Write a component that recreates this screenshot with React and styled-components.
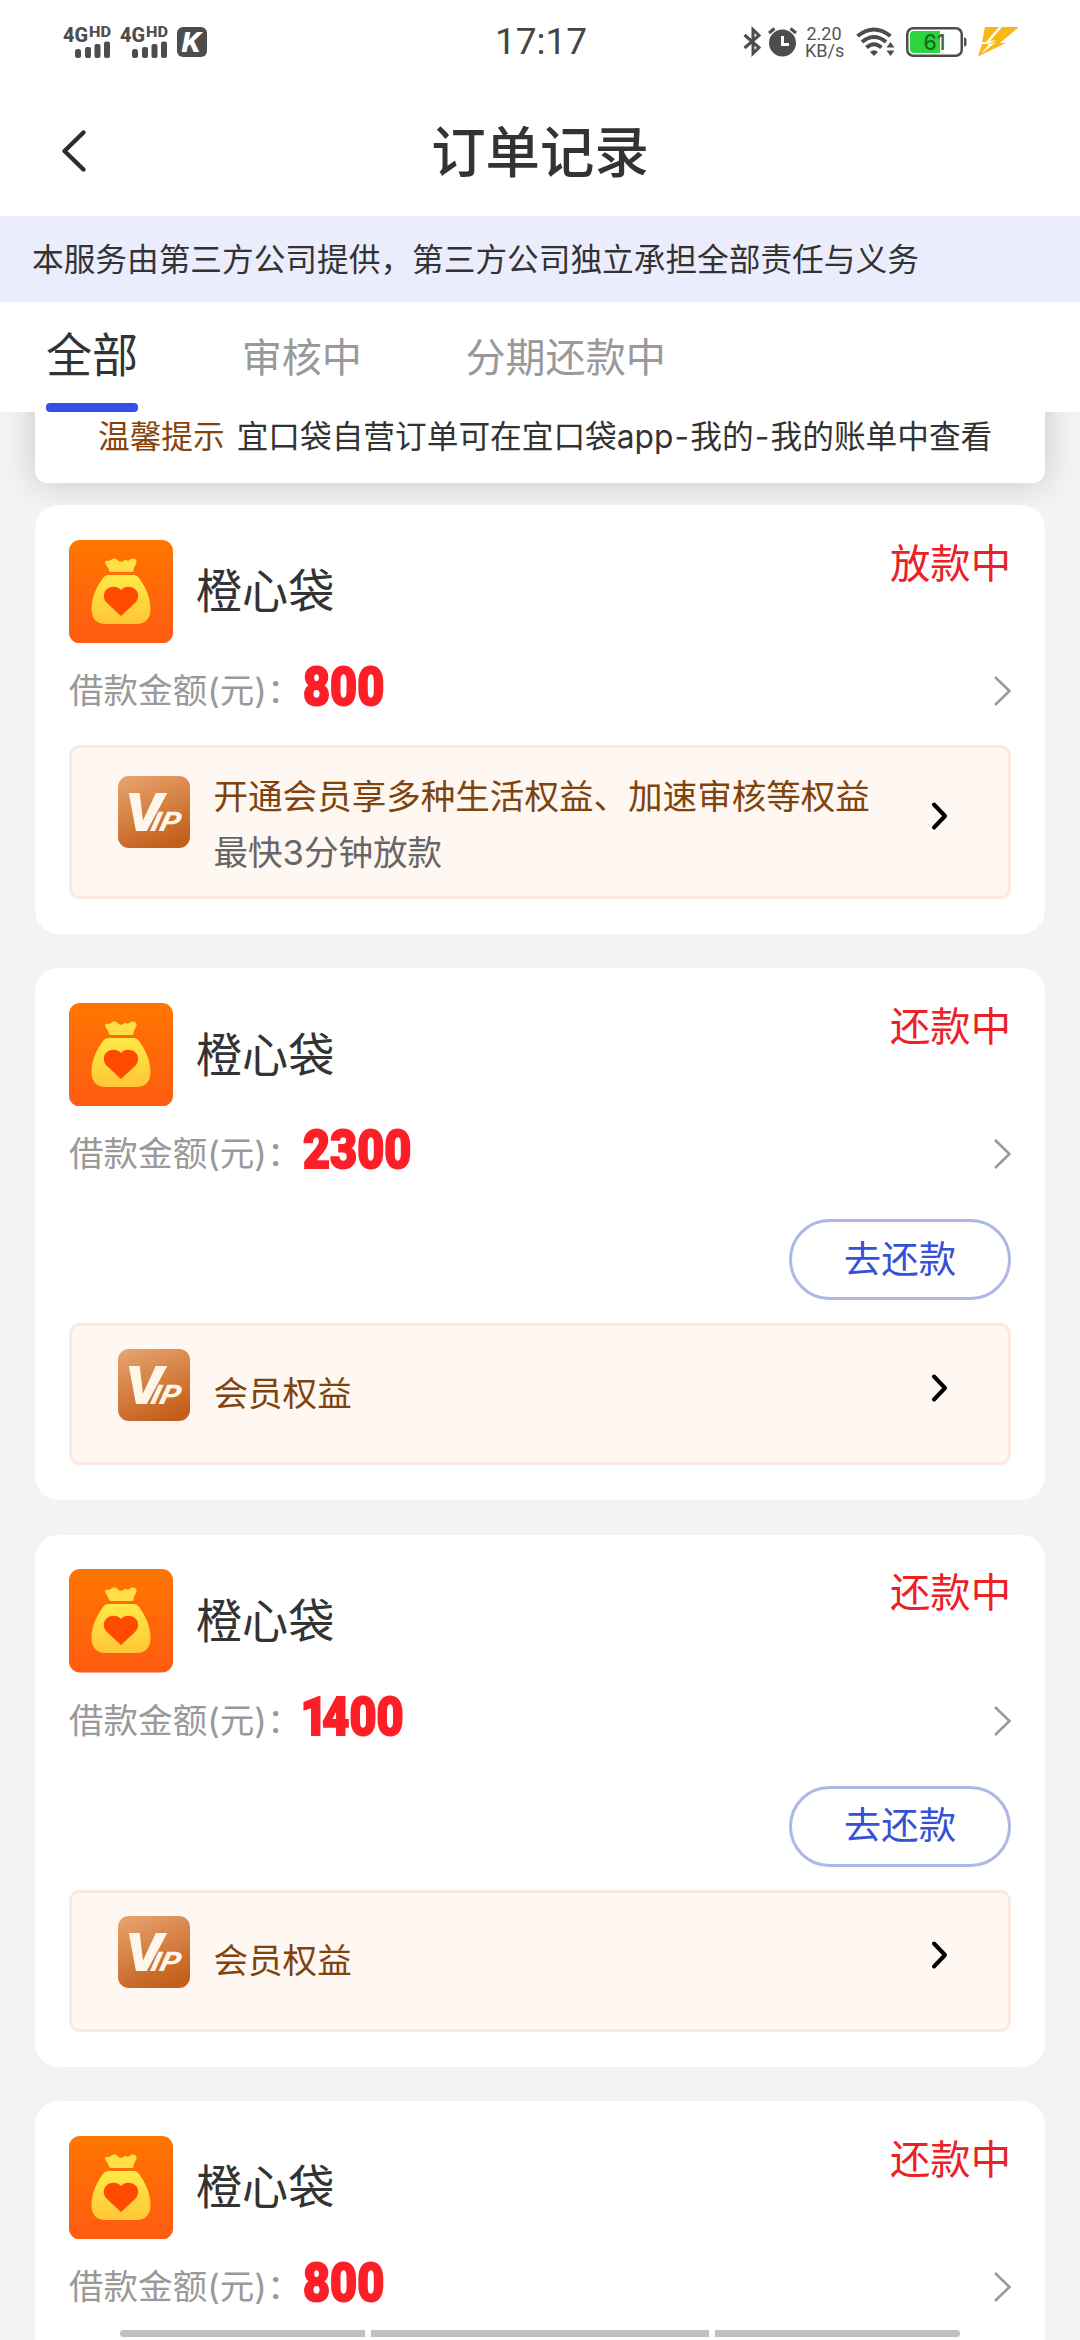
import styled, { createGlobalStyle } from "styled-components";

const GlobalStyle = createGlobalStyle`
  * {
    box-sizing: border-box;
  }

  body {
    margin: 0;
    background: #f3f3f3;
    font-family: Inter, "Noto Sans CJK SC", sans-serif;
    overflow: hidden;
  }
`;

const Page = styled.div`
  position: relative;
  width: 1080px;
  height: 2340px;
  display: flex;
  flex-direction: column;
  overflow: hidden;
  background: #f3f3f3;
`;

const StatusBar = styled.div`
  height: 84px;
  flex-shrink: 0;
  display: grid;
  grid-template-columns: 1fr auto 1fr;
  align-items: center;
  padding: 0 61px 0 63px;
  background: #fff;

  svg {
    display: block;
    overflow: visible;
  }
`;

const StatusGroup = styled.div`
  display: flex;
  align-items: center;
  justify-content: ${({ $end }) => ($end ? "flex-end" : "flex-start")};
`;

const Signal = styled.svg`
  margin-right: 9px;
`;

const Battery = styled.svg`
  margin: 0 11px 0 10px;
`;

const Clock = styled.div`
  font-family: Roboto, sans-serif;
  font-size: 37px;
  font-weight: 400;
  line-height: 44px;
  color: #444;
`;

const NetSpeed = styled.div`
  width: 38px;
  margin: 0 13px 0 8px;
  font-family: Roboto, sans-serif;
  font-size: 18px;
  line-height: 17px;
  text-align: center;
  color: #555;
  white-space: nowrap;
`;

const Header = styled.div`
  height: 132px;
  flex-shrink: 0;
  display: grid;
  grid-template-columns: 120px 1fr 120px;
  align-items: center;
  background: #fff;
`;

const BackButton = styled.button`
  border: none;
  background: none;
  padding: 2px 0 0 59px;
  text-align: left;

  svg {
    display: block;
  }
`;

const Title = styled.h1`
  margin: 0;
  padding-top: 4px;
  font-size: 54.4px;
  font-weight: 500;
  line-height: 76px;
  text-align: center;
  color: #333;
`;

const Notice = styled.div`
  height: 86px;
  flex-shrink: 0;
  padding-left: 32px;
  background: #ebedfd;
  font-size: 31.68px;
  line-height: 88px;
  color: #333;
  white-space: nowrap;
`;

const Tabs = styled.div`
  height: 110px;
  flex-shrink: 0;
  display: flex;
  gap: 103.5px;
  padding-left: 46px;
  background: #fff;
`;

const Tab = styled.div`
  height: 110px;
  padding-top: ${({ $active }) => ($active ? "6px" : "0")};
  font-size: ${({ $active }) => ($active ? "46.08px" : "40.1px")};
  line-height: ${({ $active }) => ($active ? "95px" : "111px")};
  color: ${({ $active }) => ($active ? "#333" : "#999")};

  &::after {
    content: "";
    display: ${({ $active }) => ($active ? "block" : "none")};
    height: 9px;
    border-radius: 4px;
    background: #3350e6;
  }
`;

const List = styled.div`
  flex: 1;
  min-height: 0;
  overflow: hidden;
  padding: 0 35px;
`;

const Tip = styled.div`
  height: 111px;
  margin-top: -40px;
  margin-bottom: 22px;
  padding: 40px 0 0 63px;
  border-radius: 12px;
  background: #fff;
  box-shadow: 0 0 35px rgba(0, 0, 0, 0.18);
  font-size: 31.68px;
  line-height: 49px;
  color: #333;
  white-space: nowrap;
`;

const TipLabel = styled.span`
  margin-right: 12px;
  color: #86430c;
`;

const Dash = styled.span`
  margin: 0 1.2px;
`;

const Card = styled.div`
  margin-bottom: 34.4px;
  padding: 34.5px 34px 35px;
  border-radius: 24px;
  background: #fff;
`;

const CardHead = styled.div`
  height: 103.5px;
  display: flex;
  align-items: center;
`;

const Name = styled.div`
  margin-left: 23px;
  font-size: 46.08px;
  line-height: 60px;
  color: #333;
`;

const State = styled.div`
  align-self: flex-start;
  margin-left: auto;
  font-size: 40.32px;
  line-height: 47px;
  color: #ec2025;
`;

const AmountRow = styled.div`
  height: 58px;
  margin-top: 19px;
  display: flex;
  align-items: center;

  svg {
    margin-left: auto;
  }
`;

const AmountLabel = styled.span`
  font-size: 34.56px;
  line-height: 58px;
  color: #999;
`;

const Amount = styled.span`
  margin-left: 2px;
  padding-bottom: 8px;
  font-family: Roboto, sans-serif;
  font-size: 54px;
  font-weight: 900;
  line-height: 58px;
  color: #fd1f27;
  -webkit-text-stroke: 2px #fd1f27;
  transform: scaleX(0.865);
  transform-origin: left center;
`;

const Digit = styled.span`
  margin: ${({ $narrow }) => ($narrow ? "0 -6px 0 -3px" : "0")};
`;

const RepayButton = styled.button`
  display: block;
  width: 222px;
  height: 81px;
  margin: 36px 0 0 auto;
  padding: 0;
  border: 3px solid #adb8e8;
  border-radius: 41px;
  background: #fff;
  font-family: inherit;
  font-size: 37.44px;
  line-height: 72px;
  color: #3652d4;
`;

const VipBox = styled.div`
  height: ${({ $tall }) => ($tall ? "154px" : "142px")};
  margin-top: ${({ $tall }) => ($tall ? "25px" : "23px")};
  padding: ${({ $tall }) => ($tall ? "28px" : "23px")} 60px 0 46px;
  display: flex;
  align-items: flex-start;
  border: 3px solid #f9e9e0;
  border-radius: 11px;
  background: #fff7f1;
`;

const VipTexts = styled.div`
  flex: 1;
  margin-top: ${({ $tall }) => ($tall ? "-2px" : "22px")};
  margin-left: 23.5px;
  font-size: 34.56px;
  line-height: 46px;
  color: #7f430d;
`;

const VipSub = styled.div`
  margin-top: 10px;
  color: #666;
`;

const VipArrow = styled.svg`
  margin-top: ${({ $tall }) => ($tall ? "25px" : "24px")};
`;

const HomeBar = styled.div`
  position: absolute;
  left: 120px;
  bottom: 3px;
  width: 840px;
  display: grid;
  grid-template-columns: 245px 338px 245px;
  gap: 6px;
`;

const HomeSegment = styled.div`
  height: 7px;
  border-radius: ${({ $side }) =>
    $side === "left" ? "4px 0 0 4px" : $side === "right" ? "0 4px 4px 0" : "0"};
  background: #c1c1c1;
`;

const SignalIcon = () => (
  <Signal width="48" height="34" viewBox="0 0 48 34" fill="#4d4d4d">
    <g fontFamily="Roboto, sans-serif" fontWeight="800">
      <text x="0" y="17" fontSize="21" textLength="25" lengthAdjust="spacingAndGlyphs">
        4G
      </text>
      <text x="26" y="11.5" fontSize="14" textLength="22" lengthAdjust="spacingAndGlyphs">
        HD
      </text>
    </g>
    <rect x="12" y="24" width="6" height="9" rx="2.5" />
    <rect x="22" y="22" width="6" height="11" rx="2" />
    <rect x="31.5" y="19" width="6" height="14" rx="2" />
    <rect x="41" y="16.5" width="6" height="16.5" rx="2" />
  </Signal>
);

const KIcon = () => (
  <svg width="30" height="30" viewBox="0 0 30 30">
    <rect width="30" height="30" rx="6" fill="#4d4d4d" />
    <text
      x="4.5"
      y="25"
      fontFamily="Roboto, sans-serif"
      fontSize="28"
      fontWeight="800"
      fontStyle="italic"
      textLength="19"
      lengthAdjust="spacingAndGlyphs"
      fill="#fff"
    >
      K
    </text>
  </svg>
);

const StatusIcons = () => (
  <>
    <svg width="54" height="32" viewBox="0 0 54 32">
      <path
        d="M1.5 9 L16 21.5 L10 27.5 V3.5 L16 9.5 L1.5 22"
        fill="none"
        stroke="#4d4d4d"
        strokeWidth="3"
      />
      <circle cx="39.5" cy="17" r="13.5" fill="#4d4d4d" />
      <path d="M26 7 L31.5 2.5 M47.5 2.5 L53 7" stroke="#4d4d4d" strokeWidth="3" />
      <path d="M39.5 10 V18.5 H46" fill="none" stroke="#fff" strokeWidth="3" />
    </svg>
    <NetSpeed>
      2.20
      <br />
      KB/s
    </NetSpeed>
    <svg width="40" height="30" viewBox="0 0 40 30" fill="none" stroke="#4d4d4d">
      <path d="M1.5 9 Q18 -4 34.5 9" strokeWidth="4" />
      <path d="M6 15 Q18 5 30 15" strokeWidth="4" />
      <path d="M10.5 20.5 Q18 14 25.5 20.5" strokeWidth="4" />
      <path d="M14 25 Q18 21.5 22 25 L18 29 Z" fill="#4d4d4d" stroke="none" />
      <path
        d="M34.5 15 L38.5 20.5 H30.5 Z M34.5 29 L38.5 23.5 H30.5 Z"
        fill="#4d4d4d"
        stroke="none"
      />
    </svg>
    <Battery width="61" height="30" viewBox="0 0 61 30">
      <rect
        x="1.25"
        y="1.25"
        width="54.5"
        height="27.5"
        rx="6"
        fill="#fff"
        stroke="#4d4d4d"
        strokeWidth="2.5"
      />
      <path d="M8 4 H34 V26 H8 Q4 26 4 22 V8 Q4 4 8 4 Z" fill="#2bd53f" />
      <path d="M58 10.5 Q60.5 10.5 60.5 13 V17 Q60.5 19.5 58 19.5 Z" fill="#4d4d4d" />
      <text
        x="17.5"
        y="22.5"
        fontFamily="Inter, sans-serif"
        fontSize="21"
        fontWeight="500"
        fill="#176b20"
      >
        6
        <tspan fill="#456048">1</tspan>
      </text>
    </Battery>
    <svg width="41" height="30" viewBox="0 0 41 30" fill="#fbb716">
      <path d="M7 0 H21 L8 15 H4 Z" />
      <path d="M24 0 H41 L22 16 H28 L0 29.5 L4 17 L10 17 L18 13 L12 14 Z" />
      <path d="M18 15 L3 27 L11 17 Z" fill="#fff" />
    </svg>
  </>
);

const BagLogo = () => (
  <svg width="104" height="103.5" viewBox="0 0 104 103.5">
    <defs>
      <linearGradient id="bagBg" x1="0" y1="0" x2="0" y2="1">
        <stop offset="0" stopColor="#ff7600" />
        <stop offset="1" stopColor="#ff5b12" />
      </linearGradient>
      <linearGradient id="bagBody" x1="0" y1="0" x2="0" y2="1">
        <stop offset="0" stopColor="#ffea45" />
        <stop offset="1" stopColor="#ffc636" />
      </linearGradient>
    </defs>
    <rect width="104" height="103.5" rx="11" fill="url(#bagBg)" />
    <path
      d="M36 22 C36.5 20 40 21.5 42 20 C44 18 47 18 49 20.5 Q52 23 55 20.5 C57 19 58.5 22 60.5 20 C63.5 17 68.5 19 67.5 22.5 C67 25 64.5 27 64.5 31 Q64.5 32 63 32 H42 Q40.5 32 40 30.5 C39.5 27 36 25 36 22 Z"
      fill="#ffdf45"
    />
    <path
      d="M39 35 H65 Q68 35 70 38 C76 46 81.5 57 81.5 69 C81.5 78 77 84 67 84 H37 C27 84 22.5 78 22.5 69 C22.5 57 28 46 34 38 Q36 35 39 35 Z"
      fill="url(#bagBody)"
    />
    <path
      d="M52 76 L38 63 C34 59 34 53 37 50 C41 46 48 45.5 52 50 C56 45.5 63 46 67 50 C70 53 70 59 66 63 Z"
      fill="#ff4b00"
    />
  </svg>
);

const VipLogo = () => (
  <svg width="72" height="72" viewBox="0 0 72 72">
    <defs>
      <linearGradient id="vipBg" x1="0.2" y1="0" x2="0.6" y2="1">
        <stop offset="0" stopColor="#e6a16b" />
        <stop offset="1" stopColor="#c45f1b" />
      </linearGradient>
    </defs>
    <rect width="72" height="72" rx="11" fill="url(#vipBg)" />
    <g fontFamily="Roboto, sans-serif" fontWeight="900" fontStyle="italic" fill="#fff6ea">
      <text x="7" y="55" fontSize="53" textLength="38" lengthAdjust="spacingAndGlyphs">
        V
      </text>
      <text
        transform="translate(31.5 55) skewX(-14)"
        fontSize="27"
        fontWeight="800"
        textLength="29"
        lengthAdjust="spacingAndGlyphs"
      >
        IP
      </text>
    </g>
  </svg>
);

const orders = [
  { amount: "800", state: "放款中", promo: true },
  { amount: "2300", state: "还款中" },
  { amount: "1400", state: "还款中" },
  { amount: "800", state: "还款中" },
];

const OrderCard = ({ amount, state, promo }) => (
  <Card>
    <CardHead>
      <BagLogo />
      <Name>橙心袋</Name>
      <State>{state}</State>
    </CardHead>
    <AmountRow>
      <AmountLabel>借款金额(元)：</AmountLabel>
      <Amount>
        {[...amount].map((d, idx) => (
          <Digit key={idx} $narrow={d === "1"}>
            {d}
          </Digit>
        ))}
      </Amount>
      <svg width="18" height="32" viewBox="0 0 18 32">
        <path d="M2 2 L16.5 16 L2 30" fill="none" stroke="#999" strokeWidth="2.6" />
      </svg>
    </AmountRow>
    {!promo && <RepayButton>去还款</RepayButton>}
    <VipBox $tall={promo}>
      <VipLogo />
      <VipTexts $tall={promo}>
        {promo ? "开通会员享多种生活权益、加速审核等权益" : "会员权益"}
        {promo && <VipSub>最快3分钟放款</VipSub>}
      </VipTexts>
      <VipArrow $tall={promo} width="18" height="30" viewBox="0 0 18 30">
        <path
          d="M4 3.5 L15 15 L4 26.5"
          fill="none"
          stroke="#000"
          strokeWidth="4"
          strokeLinecap="round"
          strokeLinejoin="round"
        />
      </VipArrow>
    </VipBox>
  </Card>
);

const App = () => {
  return (
    <>
      <GlobalStyle />
      <Page>
        <StatusBar>
          <StatusGroup>
            <SignalIcon />
            <SignalIcon />
            <KIcon />
          </StatusGroup>
          <Clock>17:17</Clock>
          <StatusGroup $end>
            <StatusIcons />
          </StatusGroup>
        </StatusBar>
        <Header>
          <BackButton>
            <svg width="28" height="44" viewBox="0 0 28 44">
              <path
                d="M24.5 3.5 L5.5 22 L24.5 40.5"
                fill="none"
                stroke="#2d2d2d"
                strokeWidth="4.4"
                strokeLinecap="round"
                strokeLinejoin="round"
              />
            </svg>
          </BackButton>
          <Title>订单记录</Title>
        </Header>
        <Notice>本服务由第三方公司提供，第三方公司独立承担全部责任与义务</Notice>
        <Tabs>
          <Tab $active>全部</Tab>
          <Tab>审核中</Tab>
          <Tab>分期还款中</Tab>
        </Tabs>
        <List>
          <Tip>
            <TipLabel>温馨提示</TipLabel>
            宜口袋自营订单可在宜口袋app<Dash>-</Dash>我的<Dash>-</Dash>我的账单中查看
          </Tip>
          {orders.map((order, idx) => (
            <OrderCard key={idx} {...order} />
          ))}
        </List>
        <HomeBar>
          <HomeSegment $side="left" />
          <HomeSegment />
          <HomeSegment $side="right" />
        </HomeBar>
      </Page>
    </>
  );
};

export default App;
